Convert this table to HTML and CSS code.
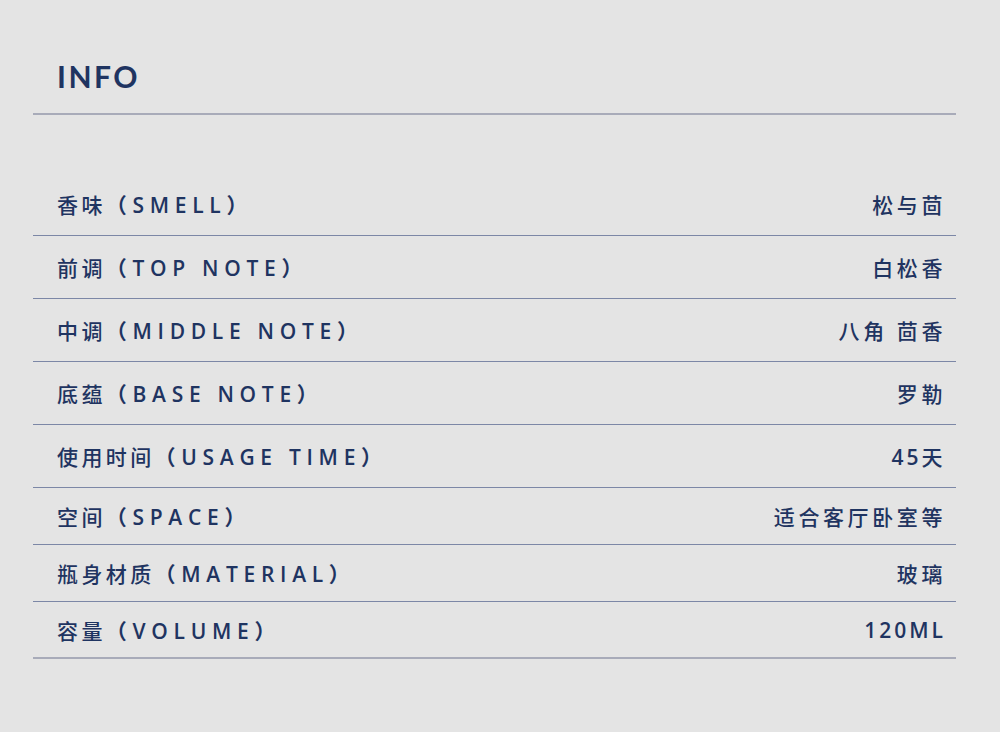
FILE: index.html
```html
<!DOCTYPE html>
<html lang="zh-CN">
<head>
<meta charset="utf-8">
<title>INFO</title>
<link rel="stylesheet" href="styles.css">
</head>
<body>
<main class="panel">
  <h1 class="title">INFO</h1>
  <ul class="specs">
    <li class="row"><span class="label">香味<span class="en">（SMELL）</span></span><span class="value">松与茴</span></li>
    <li class="row"><span class="label">前调<span class="en">（TOP NOTE）</span></span><span class="value">白松香</span></li>
    <li class="row"><span class="label">中调<span class="en">（MIDDLE NOTE）</span></span><span class="value">八角 茴香</span></li>
    <li class="row"><span class="label">底蕴<span class="en">（BASE NOTE）</span></span><span class="value">罗勒</span></li>
    <li class="row"><span class="label">使用时间<span class="en">（USAGE TIME）</span></span><span class="value"><span class="num">45</span>天</span></li>
    <li class="row row-short"><span class="label">空间<span class="en">（SPACE）</span></span><span class="value">适合客厅卧室等</span></li>
    <li class="row row-short"><span class="label">瓶身材质<span class="en">（MATERIAL）</span></span><span class="value">玻璃</span></li>
    <li class="row row-short row-last"><span class="label">容量<span class="en">（VOLUME）</span></span><span class="value"><span class="num">120ML</span></span></li>
  </ul>
</main>
</body>
</html>
```

FILE: styles.css
```css
html, body {
  margin: 0;
  padding: 0;
  background: #e4e4e4;
}

body {
  font-family: "Open Sans", "Noto Sans CJK SC", sans-serif;
  color: #1f3461;
  height: 732px;
  overflow: hidden;
}

.panel {
  margin-left: 33px;
  width: 923px;
}

.title {
  margin: 0;
  padding: 58px 0 19px 24px;
  font-family: "Lato", "Noto Sans CJK SC", sans-serif;
  font-size: 30px;
  line-height: 36px;
  font-weight: 700;
  letter-spacing: 2.5px;
  border-bottom: 2px solid #a8abb9;
}

.specs {
  list-style: none;
  margin: 58px 0 0 0;
  padding: 0;
}

.row {
  display: flex;
  justify-content: space-between;
  align-items: center;
  height: 63px;
  box-sizing: border-box;
  padding: 0 13px 0 24px;
  border-bottom: 1px solid #7c87a6;
  font-size: 21px;
  font-weight: 500;
  letter-spacing: 3.4px;
}

.en {
  font-weight: 600;
  letter-spacing: 5.7px;
}

.row-short {
  height: 57px;
}

.row-last {
  border-bottom: 2px solid #a8abb9;
}

.value {
  margin-right: -3px;
  letter-spacing: 3.6px;
}

.num {
  font-weight: 600;
  letter-spacing: 3px;
}
```
